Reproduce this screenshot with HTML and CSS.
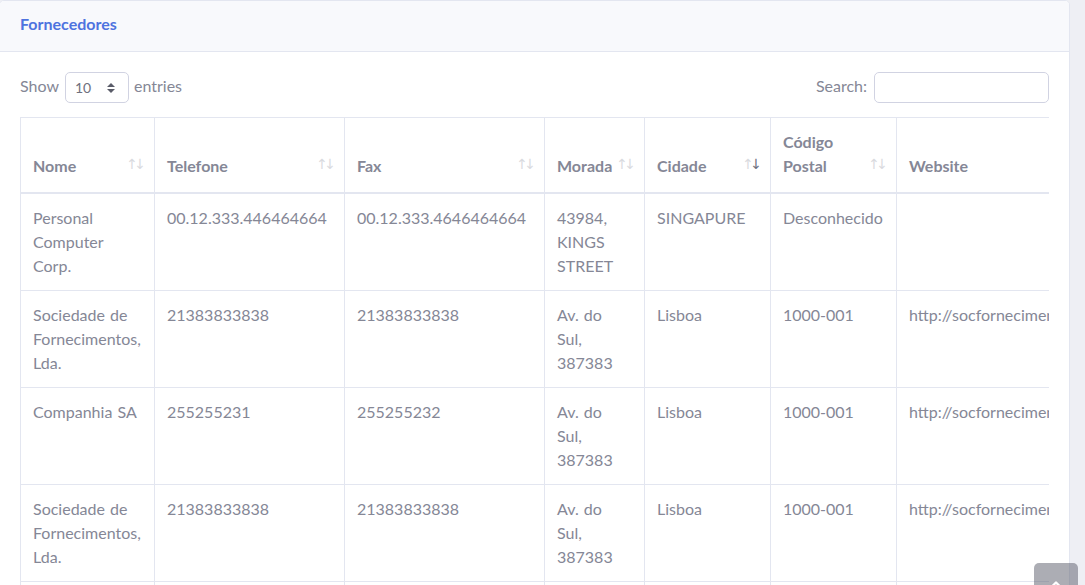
FILE: index.html
```html
<!DOCTYPE html>
<html lang="pt">
<head>
<meta charset="utf-8">
<title>Fornecedores</title>
<link rel="stylesheet" href="styles.css">
</head>
<body>
<div class="page">
  <div class="card">
    <div class="card-header">
      <h6 class="card-title">Fornecedores</h6>
    </div>
    <div class="card-body">
      <div class="dt-controls">
        <label class="dt-length">Show
          <select class="dt-select">
            <option>10</option>
            <option>25</option>
            <option>50</option>
            <option>100</option>
          </select>
          entries</label>
        <label class="dt-search">Search: <input type="search" class="dt-input"></label>
      </div>
      <div class="table-wrap">
        <table class="dt-table">
          <colgroup>
            <col class="c-nome">
            <col class="c-tel">
            <col class="c-fax">
            <col class="c-morada">
            <col class="c-cidade">
            <col class="c-cp">
            <col class="c-web">
          </colgroup>
          <thead>
            <tr>
              <th class="sorting">Nome</th>
              <th class="sorting">Telefone</th>
              <th class="sorting">Fax</th>
              <th class="sorting">Morada</th>
              <th class="sorting sorting-desc">Cidade</th>
              <th class="sorting">Código Postal</th>
              <th>Website</th>
            </tr>
          </thead>
          <tbody>
            <tr>
              <td>Personal Computer Corp.</td>
              <td>00.12.333.446464664</td>
              <td>00.12.333.4646464664</td>
              <td class="morada">43984, KINGS STREET</td>
              <td>SINGAPURE</td>
              <td>Desconhecido</td>
              <td></td>
            </tr>
            <tr>
              <td>Sociedade de Fornecimentos, Lda.</td>
              <td>21383833838</td>
              <td>21383833838</td>
              <td class="morada">Av. do Sul, 387383</td>
              <td>Lisboa</td>
              <td>1000-001</td>
              <td>http://socfornecimentos.pt</td>
            </tr>
            <tr>
              <td>Companhia SA</td>
              <td>255255231</td>
              <td>255255232</td>
              <td class="morada">Av. do Sul, 387383</td>
              <td>Lisboa</td>
              <td>1000-001</td>
              <td>http://socfornecimentos.pt</td>
            </tr>
            <tr>
              <td>Sociedade de Fornecimentos, Lda.</td>
              <td>21383833838</td>
              <td>21383833838</td>
              <td class="morada">Av. do Sul, 387383</td>
              <td>Lisboa</td>
              <td>1000-001</td>
              <td>http://socfornecimentos.pt</td>
            </tr>
            <tr>
              <td>Companhia SA</td>
              <td>255255231</td>
              <td>255255232</td>
              <td class="morada">Av. do Sul, 387383</td>
              <td>Lisboa</td>
              <td>1000-001</td>
              <td>http://socfornecimentos.pt</td>
            </tr>
          </tbody>
        </table>
      </div>
    </div>
  </div>
</div>
<a class="scroll-top" href="#">
  <svg class="scroll-top-icon" viewBox="0 0 16 16" width="16" height="16" aria-hidden="true">
    <path d="M3 10.5 L8 5.5 L13 10.5" fill="none" stroke="#fff" stroke-width="2.4" stroke-linecap="round" stroke-linejoin="round"/>
  </svg>
</a>
</body>
</html>
```

FILE: styles.css
```css
html, body {
  margin: 0;
  padding: 0;
  height: 100%;
  overflow: hidden;
}

body {
  font-family: "Lato", "Open Sans", "Liberation Sans", sans-serif;
  font-size: 16px;
  line-height: 24px;
  color: #858796;
  background: #eeeff4;
  word-spacing: 1px;
}

.page {
  height: 100%;
  padding-right: 15px;
  box-sizing: border-box;
  overflow: hidden;
}

.card {
  margin-left: -1px;
  background: #fff;
  border: 1px solid #e3e6f0;
  border-radius: 5px;
  overflow: hidden;
}

.card-header {
  background: #f8f9fc;
  border-bottom: 1px solid #e3e6f0;
  padding: 13px 20px 17px;
}

.card-title {
  margin: 0;
  font-size: 16px;
  line-height: 20px;
  font-weight: 700;
  color: #4e73df;
}

.card-body {
  padding: 20px 20px 0;
}

.dt-controls {
  display: flex;
  justify-content: space-between;
  align-items: center;
  height: 31px;
  margin-bottom: 14px;
}

.dt-length,
.dt-search {
  display: flex;
  align-items: center;
  font-weight: 400;
  margin-top: -3px;
}

.dt-select {
  appearance: none;
  -webkit-appearance: none;
  width: 64px;
  height: 31px;
  margin: 3px 5px 0 6px;
  padding: 0 24px 0 9px;
  font-family: inherit;
  font-size: 14px;
  color: #6e707e;
  border: 1px solid #d1d3e2;
  border-radius: 5px;
  background: #fff url("data:image/svg+xml,%3csvg xmlns='http://www.w3.org/2000/svg' width='8' height='10' viewBox='0 0 8 10'%3e%3cpath fill='%235a5c69' d='M4 0 L8 4 H0 Z M4 10 L0 6 H8 Z'/%3e%3c/svg%3e") no-repeat right 13px center / 8px 10px;
}

.dt-input {
  width: 175px;
  height: 31px;
  box-sizing: border-box;
  margin: 3px 0 0 7px;
  padding: 4px 8px;
  font-family: inherit;
  font-size: 14px;
  border: 1px solid #d1d3e2;
  border-radius: 5px;
  background: #fff;
}

.table-wrap {
  width: 100%;
  overflow: hidden;
}

.dt-table {
  table-layout: fixed;
  width: 1176px;
  border-collapse: collapse;
  border: 1px solid #e3e6f0;
}

.c-nome { width: 134px; }
.c-tel { width: 190px; }
.c-fax { width: 200px; }
.c-morada { width: 100px; }
.c-cidade { width: 126px; }
.c-cp { width: 126px; }
.c-web { width: 300px; }

.dt-table th,
.dt-table td {
  border: 1px solid #e3e6f0;
  padding: 12px;
  text-align: left;
  vertical-align: top;
  white-space: normal;
  overflow: hidden;
}

.dt-table td:last-child {
  white-space: nowrap;
}

.dt-table thead th {
  vertical-align: bottom;
  font-weight: 700;
  padding-bottom: 14px;
  border-bottom: 2px solid #e3e6f0;
}

.dt-table th.sorting {
  position: relative;
  padding-right: 30px;
  cursor: pointer;
}

.dt-table th.sorting::before,
.dt-table th.sorting::after {
  position: absolute;
  bottom: 16px;
  font-family: "DejaVu Sans", sans-serif;
  font-weight: 400;
  font-size: 14px;
  line-height: 24px;
  color: #858796;
  opacity: 0.3;
}

.dt-table th.sorting::before {
  content: "\2191";
  right: 16px;
}

.dt-table th.sorting::after {
  content: "\2193";
  right: 8px;
}

.dt-table th.sorting-desc::after {
  opacity: 1;
  color: #6e707e;
}

.dt-table td.morada {
  padding-right: 17px;
}

.scroll-top {
  position: fixed;
  right: 7px;
  bottom: -22px;
  width: 44px;
  height: 44px;
  display: flex;
  align-items: center;
  justify-content: center;
  border-radius: 5px;
  background: rgba(90, 92, 105, 0.5);
}

.scroll-top-icon {
  display: block;
}
```
